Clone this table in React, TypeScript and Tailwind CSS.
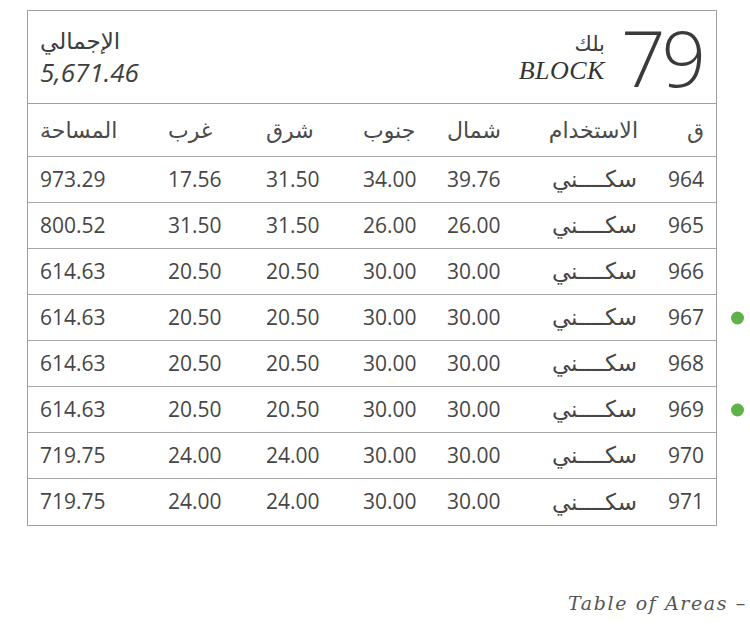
const rows = [
  { q: "964", north: "39.76", south: "34.00", east: "31.50", west: "17.56", area: "973.29", dot: false },
  { q: "965", north: "26.00", south: "26.00", east: "31.50", west: "31.50", area: "800.52", dot: false },
  { q: "966", north: "30.00", south: "30.00", east: "20.50", west: "20.50", area: "614.63", dot: false },
  { q: "967", north: "30.00", south: "30.00", east: "20.50", west: "20.50", area: "614.63", dot: true },
  { q: "968", north: "30.00", south: "30.00", east: "20.50", west: "20.50", area: "614.63", dot: false },
  { q: "969", north: "30.00", south: "30.00", east: "20.50", west: "20.50", area: "614.63", dot: true },
  { q: "970", north: "30.00", south: "30.00", east: "24.00", west: "24.00", area: "719.75", dot: false },
  { q: "971", north: "30.00", south: "30.00", east: "24.00", west: "24.00", area: "719.75", dot: false },
];

const grid = "grid grid-cols-[140px_98px_97px_84px_85px_1fr_66px] items-center";

export default function App() {
  return (
    <div className="relative h-[638px] w-[750px] overflow-hidden bg-white text-[#464646] font-['Open_Sans','DejaVu_Sans',sans-serif]">
      <div className="ml-[27px] mt-[10px] w-[690px] border-[1.5px] border-[#9c9c9c]">
        {/* title */}
        <div className="flex h-[93px] items-center justify-between border-b-[1.5px] border-[#a0a0a0] pl-[12px] pr-[14px]">
          <div className="flex flex-col items-start">
            <div className="text-[23px] leading-[30px] font-['DejaVu_Sans',sans-serif] text-[#3d3d3d]">
              الإجمالي
            </div>
            <div className="text-[26px] leading-[32px] italic text-[#3f3f3f]">5,671.46</div>
          </div>
          <div className="flex items-center gap-[16px]">
            <div className="flex flex-col items-end pt-[4px]">
              <div className="text-[21px] leading-[24px] font-['DejaVu_Sans',sans-serif] text-[#3d3d3d]">بلك</div>
              <div className="text-[26px] leading-[30px] italic tracking-[0.5px] font-['Liberation_Serif',serif] text-[#333]">
                BLOCK
              </div>
            </div>
            <div className="text-[78px] leading-[80px] font-light tracking-[-4px] font-['Open_Sans',sans-serif] text-[#3a3a3a]">
              79
            </div>
          </div>
        </div>

        {/* column headers */}
        <div className={`${grid} h-[53px] border-b-[1.5px] border-[#a8a8a8] text-[22px] font-['DejaVu_Sans',sans-serif] text-[#4a4a4a]`}>
          <div className="pl-[12px]">المساحة</div>
          <div>غرب</div>
          <div>شرق</div>
          <div>جنوب</div>
          <div>شمال</div>
          <div className="pr-[12px] text-right">الاستخدام</div>
          <div className="pr-[12px] text-right">ق</div>
        </div>

        {rows.map((r, i) => (
          <div
            key={r.q}
            className={`${grid} relative h-[46px] text-[21px] ${i < rows.length - 1 ? "border-b-[1.5px] border-[#a8a8a8]" : ""}`}
          >
            <div className="pl-[12px]">{r.area}</div>
            <div>{r.west}</div>
            <div>{r.east}</div>
            <div>{r.south}</div>
            <div>{r.north}</div>
            <div className="pr-[13px] text-right text-[23px] font-['DejaVu_Sans',sans-serif]">سكــــني</div>
            <div className="pr-[12px] text-right">{r.q}</div>
            {r.dot && (
              <span className="absolute right-[-28px] top-1/2 h-[13px] w-[13px] -translate-y-1/2 rounded-full bg-[#5fb24a]" />
            )}
          </div>
        ))}
      </div>

      <div className="absolute left-[568px] top-[589px] whitespace-nowrap text-[19px] italic tracking-[1.6px] text-[#555] font-['DejaVu_Serif',serif]">
        Table of Areas –
      </div>
    </div>
  );
}
